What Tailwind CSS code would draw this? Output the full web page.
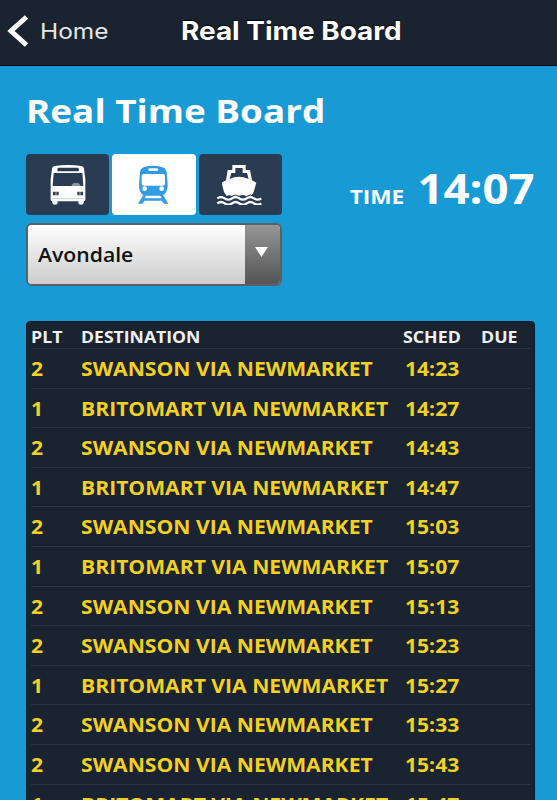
<!DOCTYPE html>
<html lang="en">
<head>
<meta charset="utf-8">
<title>Real Time Board</title>
<script src="https://cdn.jsdelivr.net/npm/@tailwindcss/browser@4"></script>
</head>
<body class="h-[800px] overflow-hidden bg-[#189ad5] font-['Open_Sans',sans-serif] text-white">
<header class="grid h-[66px] grid-cols-[181px_auto] items-center justify-start border-b border-black bg-[#192430] pb-1 font-['Inter',sans-serif]">
  <a class="flex items-center pl-[7px]">
    <svg class="h-8 w-6" viewBox="0 0 24 32" fill="none" stroke="#fff" stroke-width="5"><path d="M19.500 2 4 16l15.500 14"/></svg>
    <span class="ml-[9px] inline-block origin-left scale-x-[1.11] text-[22px] leading-7 text-[#e6e6e6]">Home</span>
  </a>
  <h1 class="origin-left scale-x-[1.117] text-[25px] leading-8 font-bold whitespace-nowrap [text-shadow:0_-1px_1px_#000]">Real Time Board</h1>
</header>

<main class="px-[26px]">
  <h2 class="mt-[22px] h-[45px] w-fit origin-left scale-x-[1.117] text-[33px] leading-[45px] font-bold whitespace-nowrap">Real Time Board</h2>

  <div class="mt-[21px] flex h-[61px] justify-between">
    <div class="flex gap-[3px]">
      <button class="flex h-[61px] w-[83px] items-center justify-center rounded-[4px] bg-[#2a3c52]">
        <svg class="h-[40px] w-9" viewBox="14 17 108 120">
          <path fill="#fff" fill-rule="evenodd" d="M28 20Q68 14 108 20Q115 21 116 28L120 60V120Q120 126 115 126V130Q115 136 107 136T99 130V126H37V130Q37 136 29 136T21 130V126Q16 126 16 120V60L20 28Q21 21 28 20ZM40 25Q36 25 36 31T40 36H97Q101 36 101 31T97 25ZM25 41L22 80H114L111 41Z"/>
          <path fill="#2a3c52" d="M23 97H40V108H23ZM96 97H113V108H96Z"/>
          <path stroke="#fff" stroke-width="2" d="M32 95V110M104 95V110"/>
          <path fill="#8a96a4" d="M78 80Q81 70 92 70T106 80Z"/>
          <path stroke="#b4bdc6" stroke-width="2" d="M20 118H116"/>
        </svg>
      </button>
      <button class="flex h-[61px] w-[84px] items-center justify-center rounded-[4px] bg-white">
        <svg class="mr-[2px] h-[39px] w-8" viewBox="20 21 96 117">
          <path fill="#319be3" fill-rule="evenodd" d="M42 27Q68 20 94 27Q107 30 109 42L112 80Q112 104 98 111L114 137H101L94 128H43L36 137H23L39 111Q26 104 26 80L29 42Q31 30 42 27ZM58 31Q54 31 54 35T58 39H79Q83 39 83 35T79 31ZM40 48Q34 48 34 54V77Q34 83 40 83H98Q104 83 104 77V54Q104 48 98 48ZM43 85A7 7 0 1 0 43 99A7 7 0 1 0 43 85ZM94 85A7 7 0 1 0 94 99A7 7 0 1 0 94 85ZM47 113L43 121H94L90 113Z"/>
        </svg>
      </button>
      <button class="flex h-[61px] w-[83px] items-center justify-center rounded-[4px] bg-[#2a3c52]">
        <svg class="mr-[3px] h-[41px] w-[46px]" viewBox="3 16 138 123">
          <path fill="#fff" fill-rule="evenodd" d="M52 19H92V34H105L111 65L124 72L116 100L110 110Q101 116 93 112Q83 106 72 112Q61 118 51 112Q42 107 35 112L27 100L20 72L33 65L38 34H52ZM61 28V43H49L44 61Q58 54 72 54T101 61L96 43H83V28Z"/>
          <path fill="none" stroke="#fff" stroke-width="7" d="M7 119Q18 111 29 119T51 119T73 119T95 119T117 119T139 119M7 134Q18 126 29 134T51 134T73 134T95 134T117 134T139 134"/>
          <path fill="none" stroke="#2a3c52" stroke-width="3" d="M7 113Q18 105 29 113T51 113T73 113T95 113T117 113T139 113"/>
        </svg>
      </button>
    </div>
    <p class="-mr-[3px] flex items-baseline gap-[24px] font-bold">
      <span class="origin-right scale-x-[1.13] text-[20px]">TIME</span>
      <span class="origin-right scale-x-[1.11] text-[41px] leading-[69px]">14:07</span>
    </p>
  </div>

  <div class="mt-2 flex h-[63px] w-[256px] overflow-hidden rounded-[6px] border-2 border-[#5c6064] bg-[#d8d8d8] text-[#111]">
    <span class="flex-1 bg-gradient-to-b from-white to-[#ccc] pt-[16px] pl-[10px] text-[19px] leading-[28px] font-semibold"><span class="inline-block origin-left scale-x-[1.115]">Avondale</span></span>
    <span class="flex w-[35px] justify-center bg-gradient-to-b from-[#969696] to-[#555] pt-[22px] pr-[2px]">
      <svg class="h-[10px] w-[13px]" viewBox="0 0 13 10"><path fill="#fff" d="M0 0H13L6.500 10Z"/></svg>
    </span>
  </div>

  <section class="mt-[35px] w-[509px] rounded-t-[4px] border border-[#101922] bg-[#192430] px-1 font-bold">
    <div class="grid h-[27px] grid-cols-[50px_322px_78px_auto] justify-start border-b border-[#2b3642] pt-[4px] text-[16px] leading-[22px] text-[#f0f0f0]">
      <span class="origin-left scale-x-[1.11] justify-self-start">PLT</span>
      <span class="origin-left scale-x-[1.1] justify-self-start">DESTINATION</span>
      <span class="origin-left scale-x-[1.11] justify-self-start">SCHED</span>
      <span class="origin-left scale-x-[1.11] justify-self-start">DUE</span>
    </div>
    <div id="departures"></div>
  </section>
</main>

<template id="row">
  <div class="grid h-[39.6px] grid-cols-[50px_324px_1fr] border-b border-[#2b3642] pt-[7px] text-[19px] leading-[26px] text-[#f3d022]">
    <span class="origin-left scale-x-[1.11] justify-self-start"></span>
    <span class="origin-left scale-x-[1.112] justify-self-start whitespace-nowrap"></span>
    <span class="origin-left scale-x-[1.11] justify-self-start"></span>
  </div>
</template>
<script>
const departures = [
  [2, '14:23'], [1, '14:27'], [2, '14:43'], [1, '14:47'], [2, '15:03'], [1, '15:07'],
  [2, '15:13'], [2, '15:23'], [1, '15:27'], [2, '15:33'], [2, '15:43'], [1, '15:47']
];
const template = document.getElementById('row');
for (const [platform, time] of departures) {
  const row = template.content.cloneNode(true);
  const cells = row.querySelectorAll('span');
  cells[0].textContent = platform;
  cells[1].textContent = (platform === 2 ? 'SWANSON' : 'BRITOMART') + ' VIA NEWMARKET';
  cells[2].textContent = time;
  document.getElementById('departures').append(row);
}
</script>
</body>
</html>
